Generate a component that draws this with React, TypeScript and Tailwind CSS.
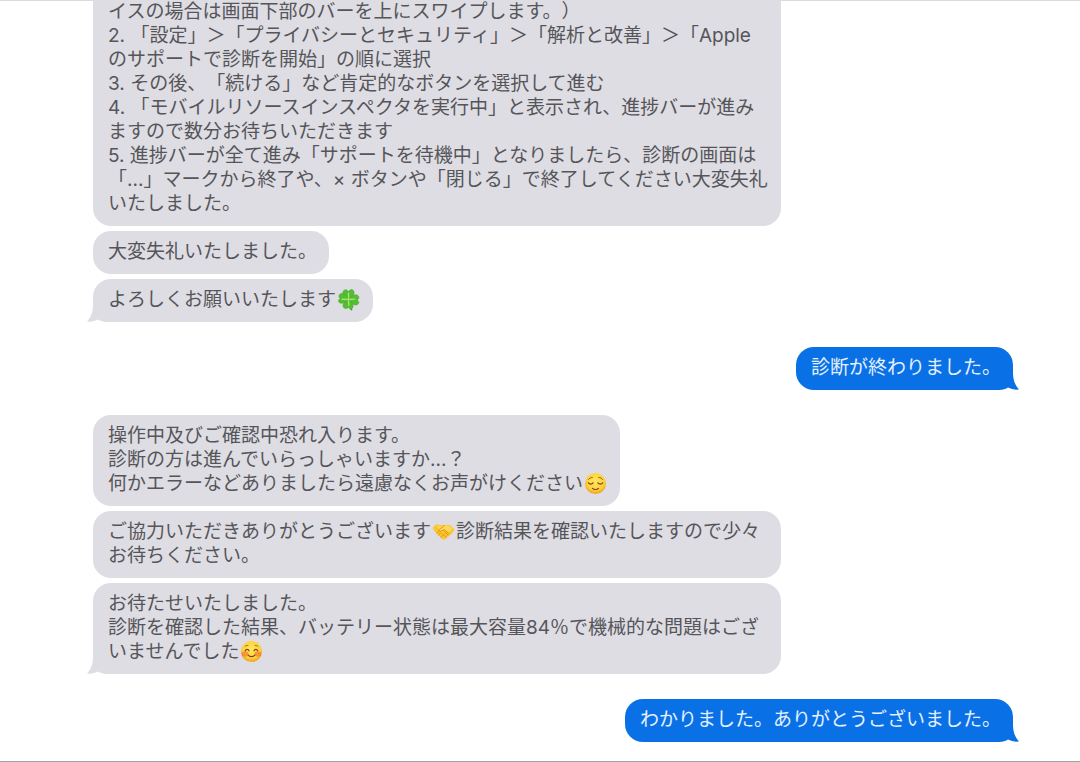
import React from 'react';
import clsx from 'clsx';

interface Message {
    id: number;
    lines: React.ReactNode[];
    wide?: boolean;
    tail?: boolean;
    continued?: boolean;
}

interface MessageGroup {
    id: number;
    from: 'support' | 'me';
    messages: Message[];
}

const EMOJI_CLASS = 'inline-block w-[23px] h-[23px] mx-px align-[-5px]';

const CloverEmoji: React.FC = () => (
    <svg viewBox="0 0 24 24" role="img" aria-label="四つ葉のクローバー" className={EMOJI_CLASS}>
        <path d="M12 12c.3 4 1 7.500 3.200 10.600" fill="none" stroke="#3f9a1e" strokeWidth="1.600" strokeLinecap="round" />
        <g fill="#55bd33" stroke="#43a528" strokeWidth=".5">
            <path d="M12 12C8.500 10.500 6 8.500 6 5.300 6 2.500 8.500 1 10.200 2.100c.9.500 1.400 1.200 1.700 2 .6-1.500 2.100-2.900 4-2.300 2.300.8 2.400 3.600 1.300 5.600C16 9.600 14 11 12 12Z" />
            <path d="M12 12c2-2.900 4.700-5.300 7.700-5 2.600.2 4 2.700 2.700 4.300-.4.500-.9.900-1.500 1.100 1.600.7 2.500 2.500 1.400 4.100-1.400 1.900-4.100 1.500-6 .3C14.500 15.700 13.200 14 12 12Z" />
            <path d="M12 12c2.600 2 5 4.500 4.800 7.300-.2 2.500-2.600 3.600-4 2.200-.5-.5-.8-1.100-.9-1.700-.8 1.400-2.600 2.300-4.300 1.200-2-1.300-1.600-3.900-.3-5.700C8.600 13.700 10.300 12.700 12 12Z" />
            <path d="M12 12c-2.500 2.300-5 4.300-7.700 4-2.500-.3-3.500-2.600-2.200-4 .5-.5 1-.8 1.600-.9C2.300 10.300 1.300 8.600 2.400 7c1.400-2 4-1.500 5.800-.3C9.900 7.900 11.100 9.900 12 12Z" />
        </g>
        <path d="M12 12V5.500M12 12l6.500-.4M12 12l.3 6M12 12l-6.500-.3" fill="none" stroke="#a2e56a" strokeWidth="1.400" strokeLinecap="round" />
    </svg>
);

const FaceBase: React.FC<{ id: string }> = ({ id }) => (
    <>
        <defs>
            <radialGradient id={id} cx=".5" cy=".4" r=".62">
                <stop offset="0" stopColor="#ffe65c" />
                <stop offset=".65" stopColor="#ffd33d" />
                <stop offset="1" stopColor="#ee981d" />
            </radialGradient>
        </defs>
        <circle cx="12" cy="12" r="11" fill={`url(#${id})`} />
    </>
);

const RelievedEmoji: React.FC = () => (
    <svg viewBox="0 0 24 24" role="img" aria-label="ほっとした顔" className={EMOJI_CLASS}>
        <FaceBase id="face-relieved" />
        <g fill="none" stroke="#73441a" strokeWidth="1.200" strokeLinecap="round">
            <path d="M4.500 11.300c1.200 1.700 3.900 1.700 5 0M14.500 11.300c1.100 1.700 3.800 1.700 5 0" />
            <path d="M4.800 7.700c1-1.400 2.400-2 3.900-2M15.300 5.700c1.500 0 2.900.6 3.900 2" strokeWidth=".9" />
            <path d="M8.800 17c1.700 1.700 4.700 1.700 6.400 0" />
        </g>
    </svg>
);

const SmilingEmoji: React.FC = () => (
    <svg viewBox="0 0 24 24" role="img" aria-label="にっこり笑顔" className={EMOJI_CLASS}>
        <FaceBase id="face-smiling" />
        <ellipse cx="5.300" cy="14.500" rx="3.600" ry="2.800" fill="#f4552c" opacity=".5" />
        <ellipse cx="18.700" cy="14.500" rx="3.600" ry="2.800" fill="#f4552c" opacity=".5" />
        <g fill="none" stroke="#73441a" strokeWidth="1.200" strokeLinecap="round">
            <path d="M5.500 11.300c.8-2 3.100-2 3.900 0M14.600 11.300c.8-2 3.100-2 3.900 0" />
            <path d="M5.300 6.800c.8-.9 1.800-1.300 3-1.200M15.700 5.600c1.200-.1 2.200.3 3 1.200" strokeWidth=".8" />
            <path d="M8.500 15.700c1.600 2.300 5.400 2.300 7 0" />
        </g>
    </svg>
);

const HandshakeEmoji: React.FC = () => (
    <svg viewBox="0 0 24 24" role="img" aria-label="握手" className={EMOJI_CLASS}>
        <path
            d="M.8 7.800 4.800 4.300c2.400 1.300 4.500 1.500 7 1 2.700-.6 5 .1 7.300.2L23.300 10c-.7 2-2 3.600-3.600 4.900l-5.300 4.700c-1.500 1.100-3 1-4.300-.2l-5-5C3 12.400 1.400 10.300.8 7.800Z"
            fill="#fcc42f"
        />
        <path d="M5 5.500c3 1.500 5 .9 8 .3 2.500-.4 4.500.6 6.200.9l2 3.300-4.300 3.200-4.800-3.500-3.300 2.200c-1.500.4-2.300-.7-1.300-1.800Z" fill="#ffd955" />
        <path
            d="m12.800 6-5.200 3.800c-1.200 1.200.1 2.700 1.800 1.900l3.300-1.600 5.200 4.200M11 14.500l3.800 3.300M13.300 12.700l3.400 3.300M5.200 13.800l2-1.700M7 15.800l2-1.800M9.100 18l1.800-1.800"
            fill="none"
            stroke="#d98d13"
            strokeWidth=".9"
            strokeLinecap="round"
        />
    </svg>
);

const CONVERSATION: MessageGroup[] = [
    {
        id: 1,
        from: 'support',
        messages: [
            {
                id: 1,
                wide: true,
                continued: true,
                lines: [
                    'イスの場合は画面下部のバーを上にスワイプします。）',
                    '2. 「設定」＞「プライバシーとセキュリティ」＞「解析と改善」＞「Apple',
                    'のサポートで診断を開始」の順に選択',
                    '3. その後、「続ける」など肯定的なボタンを選択して進む',
                    '4. 「モバイルリソースインスペクタを実行中」と表示され、進捗バーが進み',
                    'ますので数分お待ちいただきます',
                    '5. 進捗バーが全て進み「サポートを待機中」となりましたら、診断の画面は',
                    '「...」マークから終了や、× ボタンや「閉じる」で終了してください大変失礼',
                    'いたしました。',
                ],
            },
            { id: 2, lines: ['大変失礼いたしました。'] },
            { id: 3, tail: true, lines: [<>よろしくお願いいたします<CloverEmoji /></>] },
        ],
    },
    {
        id: 2,
        from: 'me',
        messages: [{ id: 4, tail: true, lines: ['診断が終わりました。'] }],
    },
    {
        id: 3,
        from: 'support',
        messages: [
            {
                id: 5,
                lines: [
                    '操作中及びご確認中恐れ入ります。',
                    '診断の方は進んでいらっしゃいますか...？',
                    <>何かエラーなどありましたら遠慮なくお声がけください<RelievedEmoji /></>,
                ],
            },
            {
                id: 6,
                wide: true,
                lines: [
                    <>ご協力いただきありがとうございます<HandshakeEmoji />診断結果を確認いたしますので少々</>,
                    'お待ちください。',
                ],
            },
            {
                id: 7,
                wide: true,
                tail: true,
                lines: [
                    'お待たせいたしました。',
                    '診断を確認した結果、バッテリー状態は最大容量84％で機械的な問題はござ',
                    <>いませんでした<SmilingEmoji /></>,
                ],
            },
        ],
    },
    {
        id: 4,
        from: 'me',
        messages: [{ id: 8, tail: true, lines: ['わかりました。ありがとうございました。'] }],
    },
];

const Tail: React.FC<{ mine: boolean }> = ({ mine }) => (
    <svg
        viewBox="0 0 24 20"
        aria-hidden="true"
        className={clsx(
            'absolute bottom-0 w-6 h-5',
            mine ? '-right-1.5 text-[#0a70e6]' : '-left-1.5 -scale-x-100 text-[#dedde3]'
        )}
    >
        <path d="M0 0H18V4C18.300 11 20.500 16 24 19.500C20 20 16 19 13 17.500C11 19 8 20 4 20H0Z" fill="currentColor" />
    </svg>
);

const Bubble: React.FC<{ message: Message; mine: boolean }> = ({ message, mine }) => (
    <li
        className={clsx(
            'relative max-w-[688px] pl-[15px] pr-3 pb-[10px]',
            message.wide && 'w-full',
            message.continued ? 'rounded-b-[18px]' : 'rounded-[18px] pt-[9px]',
            mine ? 'bg-[#0a70e6] text-[#e3f1ff]' : 'bg-[#dedde3] text-[#55555a]'
        )}
    >
        {message.tail && <Tail mine={mine} />}
        {message.lines.map((line, idx) => (
            <p key={idx} className="relative h-6 whitespace-nowrap">
                {line}
            </p>
        ))}
    </li>
);

const App: React.FC = () => {
    return (
        <main
            lang="ja"
            className="relative overflow-hidden bg-white border-b border-[#a3a3a3] pl-[93px] pr-[67px] pb-[19px] font-['Inter','Noto_Sans_CJK_JP',sans-serif] font-normal text-[19px] leading-6 [text-spacing-trim:space-all]"
        >
            <div className="absolute inset-x-0 top-0 h-px bg-[#dcdce0]" />
            <div className="flex flex-col gap-[25px]">
                {CONVERSATION.map((group) => (
                    <ul
                        key={group.id}
                        className={clsx('flex flex-col gap-[5px]', group.from === 'me' ? 'items-end' : 'items-start')}
                    >
                        {group.messages.map((message) => (
                            <Bubble key={message.id} message={message} mine={group.from === 'me'} />
                        ))}
                    </ul>
                ))}
            </div>
        </main>
    );
};

export default App;
